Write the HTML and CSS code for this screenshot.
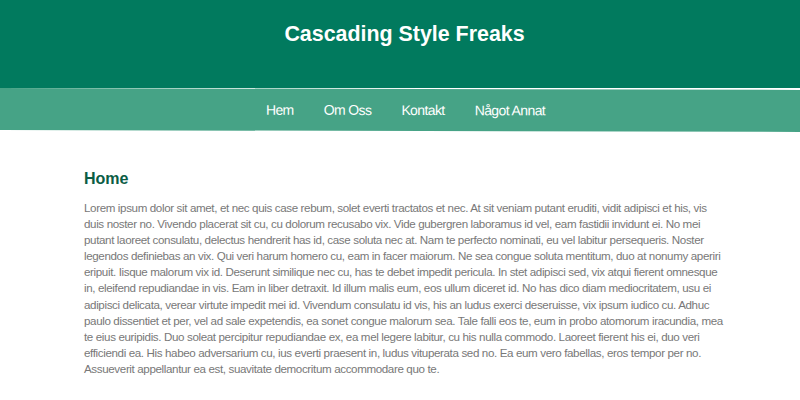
FILE: index.html
```html
<!DOCTYPE html>
<html lang="sv">
<head>
<meta charset="utf-8">
<title>Cascading Style Freaks</title>
<link rel="stylesheet" href="styles.css">
</head>
<body>
<header class="site-header">
  <h1 class="site-title">Cascading Style Freaks</h1>
</header>
<nav class="main-nav">
  <ul class="nav-list">
    <li><a href="#">Hem</a></li>
    <li><a href="#">Om Oss</a></li>
    <li><a href="#">Kontakt</a></li>
    <li><a href="#">Något Annat</a></li>
  </ul>
</nav>
<main class="content">
  <h2 class="page-title">Home</h2>
  <p class="text">Lorem ipsum dolor sit amet, et nec quis case rebum, solet everti tractatos et nec. At sit veniam putant eruditi, vidit adipisci et his, vis duis noster no. Vivendo placerat sit cu, cu dolorum recusabo vix. Vide gubergren laboramus id vel, eam fastidii invidunt ei. No mei putant laoreet consulatu, delectus hendrerit has id, case soluta nec at. Nam te perfecto nominati, eu vel labitur persequeris. Noster legendos definiebas an vix. Qui veri harum homero cu, eam in facer maiorum. Ne sea congue soluta mentitum, duo at nonumy aperiri eripuit. Iisque malorum vix id. Deserunt similique nec cu, has te debet impedit pericula. In stet adipisci sed, vix atqui fierent omnesque in, eleifend repudiandae in vis. Eam in liber detraxit. Id illum malis eum, eos ullum diceret id. No has dico diam mediocritatem, usu ei adipisci delicata, verear virtute impedit mei id. Vivendum consulatu id vis, his an ludus exerci deseruisse, vix ipsum iudico cu. Adhuc paulo dissentiet et per, vel ad sale expetendis, ea sonet congue malorum sea. Tale falli eos te, eum in probo atomorum iracundia, mea te eius euripidis. Duo soleat percipitur repudiandae ex, ea mel legere labitur, cu his nulla commodo. Laoreet fierent his ei, duo veri efficiendi ea. His habeo adversarium cu, ius everti praesent in, ludus vituperata sed no. Ea eum vero fabellas, eros tempor per no. Assueverit appellantur ea est, suavitate democritum accommodare quo te.</p>
</main>
</body>
</html>
```

FILE: styles.css
```css
html, body {
  margin: 0;
  padding: 0;
  background: #ffffff;
  font-family: "Liberation Sans", Arial, sans-serif;
}

.site-header {
  background: #017a5e;
  height: 88px;
  padding-left: 9px;
  box-sizing: border-box;
  display: flex;
  justify-content: center;
}

.site-title {
  margin: 0;
  padding-top: 21px;
  color: #ffffff;
  font-size: 21.4px;
  font-weight: bold;
  line-height: 26px;
}

.main-nav {
  background: #46a386;
  height: 42px;
  transform: skewY(0.14deg);
  transform-origin: left top;
}

.nav-list {
  list-style: none;
  margin: 0;
  padding: 0 0 0 11px;
  height: 100%;
  display: flex;
  justify-content: center;
  align-items: center;
  gap: 30px;
}

.nav-list a {
  color: #ffffff;
  text-decoration: none;
  font-size: 14px;
  letter-spacing: -0.6px;
}

.content {
  width: 640px;
  margin: 0 auto;
  padding: 39px 0 0 8px;
}

.page-title {
  margin: 0 0 11px;
  color: #0b5d45;
  font-size: 16px;
  line-height: 20px;
  font-weight: bold;
}

.text {
  margin: 0;
  color: #787878;
  font-size: 11.6px;
  letter-spacing: -0.37px;
  line-height: 16.1px;
}
```
